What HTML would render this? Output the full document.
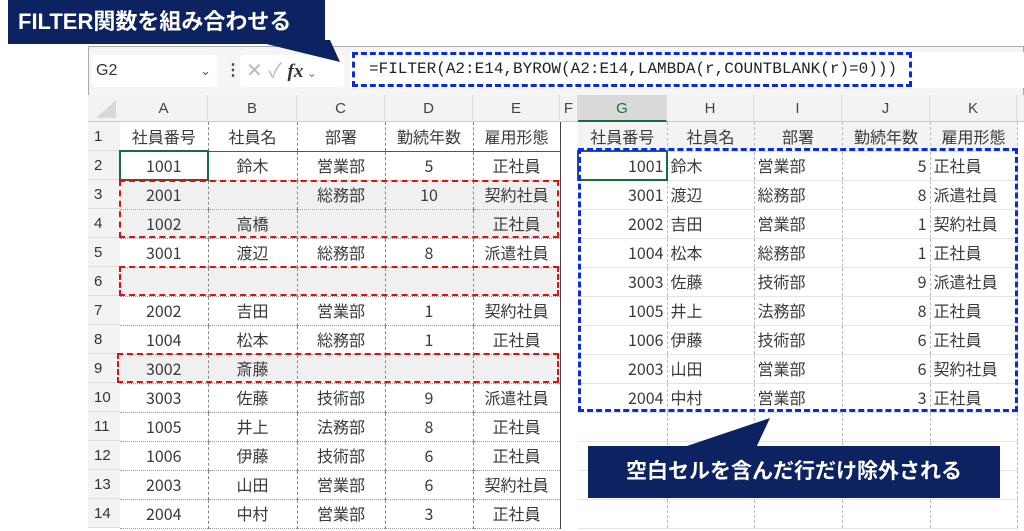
<!DOCTYPE html>
<html><head><meta charset="utf-8"><style>
*{margin:0;padding:0;box-sizing:border-box}
body{width:1024px;height:531px;background:#fff;position:relative;overflow:hidden;font-family:"Liberation Sans","Noto Sans CJK JP",sans-serif;color:#333}
.a{position:absolute}
table{border-collapse:collapse;table-layout:fixed;position:absolute}
td{height:29px;line-height:27px;font-size:16px;text-align:center;padding:0;white-space:nowrap;overflow:hidden;vertical-align:middle;font-family:"Noto Sans CJK JP",sans-serif;color:#3a3a3a}
#L td{border-right:1px dashed #888;border-bottom:1px dotted #999}
#L tr.h td{border-bottom:1px solid #555}
#L tr.g td{background:#f0f0f0}
#R td{border-right:1px dashed #bbb;border-bottom:1px solid #e4e4e4}
#R td.n{text-align:right;padding-right:3px}
#R td.t{text-align:left;padding-left:3px}
.rh{position:absolute;left:88px;width:32px;height:29px;line-height:29px;font-size:15px;padding-left:6px;color:#333;background:#f3f3f3;border-bottom:1px solid #ddd}
.ch{position:absolute;top:95px;height:27px;line-height:27px;text-align:center;font-size:15px;color:#444;border-right:1px solid #ddd}
</style></head><body>
<div class="a" style="left:88px;top:46px;width:936px;height:482px;background:#f5f5f5;border:1px solid #aaa"></div>
<div class="a" style="left:92px;top:55px;width:125px;height:32px;background:#fff;border-radius:4px;font-size:16px;line-height:32px;padding-left:4px">G2<span style="position:absolute;right:6px;color:#555;font-size:13px">&#8964;</span></div>
<div class="a" style="left:225px;top:60px;font-size:16px;color:#444;font-weight:bold">⋮</div>
<div class="a" style="left:240px;top:55px;width:104px;height:32px;background:#fff;border-radius:4px;font-size:20px;line-height:32px;color:#bbb;padding-left:6px">✕ ✓ <i style="font-family:'Liberation Serif',serif;color:#333;font-weight:bold;font-size:19px">fx</i><span style="font-size:12px;color:#777"> &#8964;</span></div>
<div class="a" style="left:350px;top:52px;width:674px;height:36px;background:#fff"></div>
<div class="a" style="left:352px;top:52px;width:560px;height:35px;border:3px dashed #0a2be0;font-family:'Liberation Mono',monospace;font-size:16px;line-height:29px;padding-left:14px;color:#222">=FILTER(A2:E14,BYROW(A2:E14,LAMBDA(r,COUNTBLANK(r)=0)))</div>
<div class="a" style="left:88px;top:95px;width:936px;height:27px;background:#f3f3f3;border-bottom:1px solid #ccc"></div>
<div class="a" style="left:96px;top:100px;width:0;height:0;border-left:20px solid transparent;border-bottom:18px solid #d8d8d8"></div>
<div class="ch" style="left:120px;width:88px">A</div>
<div class="ch" style="left:208px;width:89px">B</div>
<div class="ch" style="left:297px;width:88px">C</div>
<div class="ch" style="left:385px;width:88px">D</div>
<div class="ch" style="left:473px;width:87px">E</div>
<div class="ch" style="left:560px;width:18px">F</div>
<div class="ch" style="left:578px;width:89px;background:#d9d9d9;color:#1d6b3a;border-bottom:2px solid #1d6b3a">G</div>
<div class="ch" style="left:667px;width:87px">H</div>
<div class="ch" style="left:754px;width:88px">I</div>
<div class="ch" style="left:842px;width:88px">J</div>
<div class="ch" style="left:930px;width:87px">K</div>
<div class="rh" style="top:122px">1</div><div class="rh" style="top:151px">2</div><div class="rh" style="top:180px">3</div><div class="rh" style="top:209px">4</div><div class="rh" style="top:238px">5</div><div class="rh" style="top:267px">6</div><div class="rh" style="top:296px">7</div><div class="rh" style="top:325px">8</div><div class="rh" style="top:354px">9</div><div class="rh" style="top:383px">10</div><div class="rh" style="top:412px">11</div><div class="rh" style="top:441px">12</div><div class="rh" style="top:470px">13</div><div class="rh" style="top:499px">14</div>
<div class="a" style="left:120px;top:122px;width:904px;height:406px;background:#fff"></div>
<table id="L" style="left:120px;top:122px;width:440px;border-right:1px solid #444">
<colgroup><col style="width:88px"><col style="width:89px"><col style="width:88px"><col style="width:88px"><col style="width:87px"></colgroup>
<tr class="h"><td>社員番号</td><td>社員名</td><td>部署</td><td>勤続年数</td><td>雇用形態</td></tr>
<tr><td style="outline:2px solid #1d6b3a;outline-offset:-1px">1001</td><td>鈴木</td><td>営業部</td><td>5</td><td>正社員</td></tr>
<tr class="g"><td>2001</td><td></td><td>総務部</td><td>10</td><td>契約社員</td></tr>
<tr class="g"><td>1002</td><td>高橋</td><td></td><td></td><td>正社員</td></tr>
<tr><td>3001</td><td>渡辺</td><td>総務部</td><td>8</td><td>派遣社員</td></tr>
<tr class="g"><td></td><td></td><td></td><td></td><td></td></tr>
<tr><td>2002</td><td>吉田</td><td>営業部</td><td>1</td><td>契約社員</td></tr>
<tr><td>1004</td><td>松本</td><td>総務部</td><td>1</td><td>正社員</td></tr>
<tr class="g"><td>3002</td><td>斎藤</td><td></td><td></td><td></td></tr>
<tr><td>3003</td><td>佐藤</td><td>技術部</td><td>9</td><td>派遣社員</td></tr>
<tr><td>1005</td><td>井上</td><td>法務部</td><td>8</td><td>正社員</td></tr>
<tr><td>1006</td><td>伊藤</td><td>技術部</td><td>6</td><td>正社員</td></tr>
<tr><td>2003</td><td>山田</td><td>営業部</td><td>6</td><td>契約社員</td></tr>
<tr><td>2004</td><td>中村</td><td>営業部</td><td>3</td><td>正社員</td></tr>
</table>
<table id="R" style="left:578px;top:122px;width:439px">
<colgroup><col style="width:89px"><col style="width:87px"><col style="width:88px"><col style="width:88px"><col style="width:87px"></colgroup>
<tr style="background:#f3f3f3"><td>社員番号</td><td>社員名</td><td>部署</td><td>勤続年数</td><td>雇用形態</td></tr>
<tr><td class="n" style="outline:2px solid #1d6b3a;outline-offset:-1px">1001</td><td class="t">鈴木</td><td class="t">営業部</td><td class="n">5</td><td class="t">正社員</td></tr>
<tr><td class="n">3001</td><td class="t">渡辺</td><td class="t">総務部</td><td class="n">8</td><td class="t">派遣社員</td></tr>
<tr><td class="n">2002</td><td class="t">吉田</td><td class="t">営業部</td><td class="n">1</td><td class="t">契約社員</td></tr>
<tr><td class="n">1004</td><td class="t">松本</td><td class="t">総務部</td><td class="n">1</td><td class="t">正社員</td></tr>
<tr><td class="n">3003</td><td class="t">佐藤</td><td class="t">技術部</td><td class="n">9</td><td class="t">派遣社員</td></tr>
<tr><td class="n">1005</td><td class="t">井上</td><td class="t">法務部</td><td class="n">8</td><td class="t">正社員</td></tr>
<tr><td class="n">1006</td><td class="t">伊藤</td><td class="t">技術部</td><td class="n">6</td><td class="t">正社員</td></tr>
<tr><td class="n">2003</td><td class="t">山田</td><td class="t">営業部</td><td class="n">6</td><td class="t">契約社員</td></tr>
<tr><td class="n">2004</td><td class="t">中村</td><td class="t">営業部</td><td class="n">3</td><td class="t">正社員</td></tr>
<tr><td></td><td></td><td></td><td></td><td></td></tr>
<tr><td></td><td></td><td></td><td></td><td></td></tr>
<tr><td></td><td></td><td></td><td></td><td></td></tr>
<tr><td></td><td></td><td></td><td></td><td></td></tr>
</table>
<div class="a" style="left:119px;top:180px;width:440px;height:58px;border:2px dashed #e01010"></div>
<div class="a" style="left:119px;top:266px;width:440px;height:30px;border:2px dashed #e01010"></div>
<div class="a" style="left:117px;top:353px;width:442px;height:30px;border:2px dashed #e01010"></div>
<div class="a" style="left:578px;top:148px;width:440px;height:264px;border:3px dashed #0a2be0"></div>
<svg class="a" style="left:0;top:0" width="1024" height="531">
<polygon points="250,40 330,40 340,62" fill="#0d2260"/>
<polygon points="675,450 770,418 755,450" fill="#0d2260"/>
</svg>
<div class="a" style="left:8px;top:0;width:317px;height:44px;background:#0d2260;color:#fff;font-weight:bold;font-size:22px;line-height:44px;padding-left:10px">FILTER関数を組み合わせる</div>
<div class="a" style="left:588px;top:446px;width:412px;height:52px;background:#0d2260;color:#fff;font-weight:bold;font-size:21px;line-height:52px;text-align:center">空白セルを含んだ行だけ除外される</div>
</body></html>
